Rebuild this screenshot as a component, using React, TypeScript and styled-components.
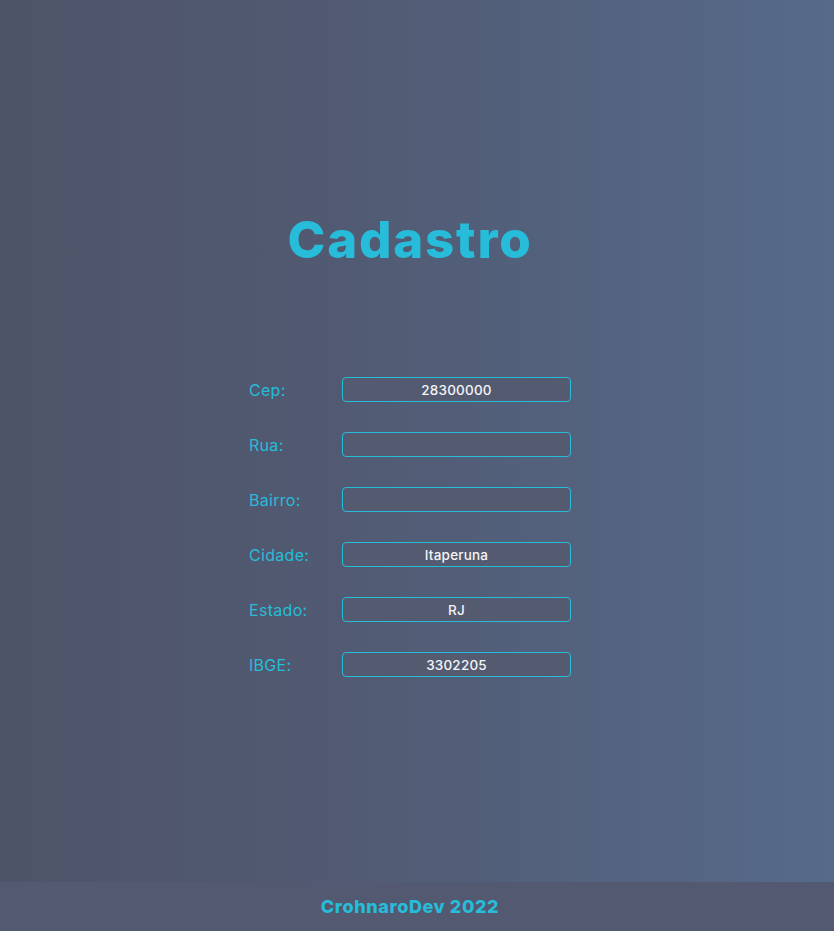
import React from "react";
import styled, { createGlobalStyle } from "styled-components";

const Global = createGlobalStyle`
  html, body { margin: 0; padding: 0; }
  body {
    font-family: Inter, "Noto Sans", sans-serif;
    background: linear-gradient(to right, #4e5468 0%, #515a72 40%, #566a8a 100%);
  }
`;

const Page = styled.div`
  display: flex;
  flex-direction: column;
  min-height: 931px;
`;

const Main = styled.main`
  height: 882px;
  display: flex;
  flex-direction: column;
  align-items: center;
  padding-right: 14px;
  box-sizing: border-box;
`;

const Title = styled.h1`
  margin: 208px 0 0;
  font-family: Inter, sans-serif;
  font-weight: 800;
  font-size: 51px;
  line-height: 64px;
  color: #27bcd9;
  letter-spacing: 1.8px;
`;

const Form = styled.form`
  margin-top: 105px;
  display: flex;
  flex-direction: column;
  gap: 30px;
`;

const Row = styled.div`
  display: grid;
  grid-template-columns: 93px 229px;
  align-items: center;
`;

const Label = styled.label`
  font-family: Inter, sans-serif;
  font-size: 16px;
  font-weight: 400;
  letter-spacing: 0.3px;
  color: #27bcd9;
`;

const Input = styled.input`
  box-sizing: border-box;
  height: 25px;
  width: 229px;
  border: 1px solid #27bcd9;
  border-radius: 4px;
  background: #545a70;
  color: #f2f4f8;
  text-align: center;
  font-family: Inter, sans-serif;
  font-size: 13.5px;
  font-weight: 500;
  letter-spacing: 0.2px;
  outline: none;
  padding: 0 6px;
`;

const Footer = styled.footer`
  height: 49px;
  background: #535971;
  display: flex;
  align-items: center;
  justify-content: center;
  padding-right: 14px;
  font-family: Inter, sans-serif;
  font-weight: 800;
  font-size: 18px;
  letter-spacing: 0.6px;
  color: #27bcd9;
`;

const fields: [string, string][] = [
  ["Cep:", "28300000"],
  ["Rua:", ""],
  ["Bairro:", ""],
  ["Cidade:", "Itaperuna"],
  ["Estado:", "RJ"],
  ["IBGE:", "3302205"],
];

export default function App() {
  return (
    <>
      <Global />
      <Page>
        <Main>
          <Title>Cadastro</Title>
          <Form>
            {fields.map(([l, v]) => (
              <Row key={l}>
                <Label>{l}</Label>
                <Input defaultValue={v} />
              </Row>
            ))}
          </Form>
        </Main>
        <Footer>CrohnaroDev 2022</Footer>
      </Page>
    </>
  );
}
